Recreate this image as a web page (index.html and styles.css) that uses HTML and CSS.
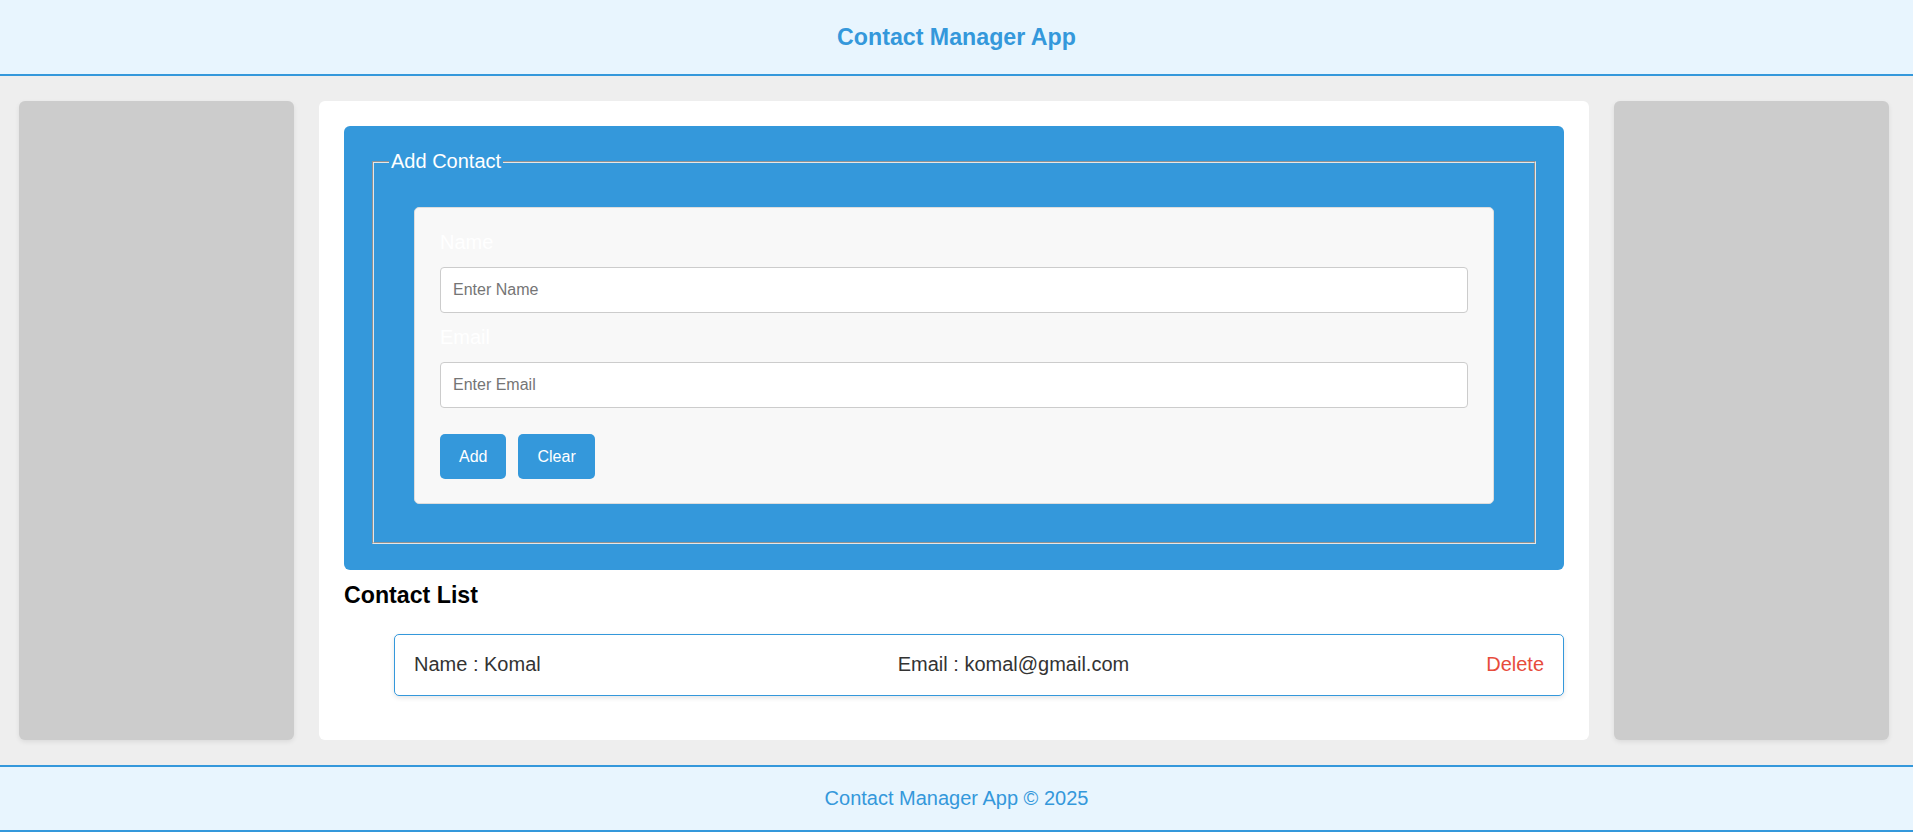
FILE: index.html
```html
<!DOCTYPE html>
<html lang="en">
<head>
<meta charset="utf-8">
<title>Contact Manager App</title>
<link rel="stylesheet" href="styles.css">
</head>
<body>
<header class="site-header">
  <h1 class="site-title">Contact Manager App</h1>
</header>
<main class="layout">
  <aside class="sidebar"></aside>
  <section class="content">
    <div class="form-panel">
      <fieldset class="form-fieldset">
        <legend class="form-legend">Add Contact</legend>
        <form class="form-card">
          <label class="form-label" for="name">Name</label>
          <input class="form-input" id="name" type="text" placeholder="Enter Name">
          <label class="form-label" for="email">Email</label>
          <input class="form-input" id="email" type="email" placeholder="Enter Email">
          <div class="form-actions">
            <button class="btn" type="button">Add</button>
            <button class="btn" type="button">Clear</button>
          </div>
        </form>
      </fieldset>
    </div>
    <h3 class="list-title">Contact List</h3>
    <ul class="contact-list">
      <li class="contact-item">
        <span class="contact-name">Name : Komal</span>
        <span class="contact-email">Email : komal@gmail.com</span>
        <span class="contact-delete">Delete</span>
      </li>
    </ul>
  </section>
  <aside class="sidebar"></aside>
</main>
<footer class="site-footer">Contact Manager App © 2025</footer>
</body>
</html>
```
FILE: styles.css
```css
* {
  box-sizing: border-box;
}

html, body {
  margin: 0;
  padding: 0;
  background: #ffffff;
  font-family: "Liberation Sans", Arial, sans-serif;
}

.site-header {
  height: 76px;
  background: #e8f5fe;
  border-bottom: 2px solid #3498db;
  display: flex;
  align-items: center;
  justify-content: center;
}

.site-title {
  margin: 0;
  font-size: 23.2px;
  font-weight: bold;
  color: #3498db;
}

.layout {
  display: flex;
  gap: 25px;
  padding: 25px 24px 25px 19px;
  background: #eeeeee;
}

.sidebar {
  width: 275px;
  flex: 0 0 275px;
  background: #cccccc;
  border-radius: 6px;
  box-shadow: 0 2px 5px rgba(0, 0, 0, 0.08);
}

.content {
  flex: 1;
  background: #ffffff;
  border-radius: 6px;
  padding: 25px;
}

.form-panel {
  background: #3498db;
  border-radius: 6px;
  padding: 24px 28px 26px;
}

.form-fieldset {
  margin: 0;
  padding: 0 15px;
  border: 2px groove #e6e6e6;
  min-width: 0;
}

.form-legend {
  padding: 0 2px;
  font-size: 20px;
  line-height: 23px;
  color: #ffffff;
}

.form-card {
  margin: 34px 25px 38px;
  background: #f8f8f8;
  border: 1px solid #dddddd;
  border-radius: 5px;
  padding: 23px 25px 24px;
}

.form-label {
  display: block;
  font-size: 20px;
  line-height: 23px;
  color: #ffffff;
  margin-bottom: 13px;
}

.form-input {
  display: block;
  width: 100%;
  height: 46px;
  margin: 0 0 13px;
  padding: 0 12px;
  border: 1px solid #cccccc;
  border-radius: 4px;
  background: #ffffff;
  font-family: "Liberation Sans", Arial, sans-serif;
  font-size: 16px;
  color: #333333;
}

.form-input::placeholder {
  color: #757575;
}

.form-actions {
  display: flex;
  gap: 12px;
  margin-top: 26px;
}

.btn {
  background: #3498db;
  color: #ffffff;
  border: none;
  border-radius: 5px;
  padding: 13px 19px;
  font-family: "Liberation Sans", Arial, sans-serif;
  font-size: 16px;
  line-height: 19px;
}

.list-title {
  margin: 12px 0 0;
  font-size: 23.2px;
  font-weight: bold;
  color: #000000;
}

.contact-list {
  list-style: none;
  margin: 25px 0 19px;
  padding: 0 0 0 50px;
}

.contact-item {
  display: flex;
  justify-content: space-between;
  align-items: center;
  border: 1px solid #3498db;
  border-radius: 5px;
  padding: 17px 19px 19px;
  font-size: 20px;
  line-height: 24px;
  color: #333333;
  box-shadow: 0 2px 5px rgba(0, 0, 0, 0.1);
}

.contact-delete {
  color: #e74c3c;
}

.site-footer {
  background: #e8f5fe;
  border-top: 2px solid #3498db;
  border-bottom: 2px solid #3498db;
  padding: 20px 0;
  line-height: 23px;
  font-size: 20px;
  color: #3498db;
  text-align: center;
}
```
